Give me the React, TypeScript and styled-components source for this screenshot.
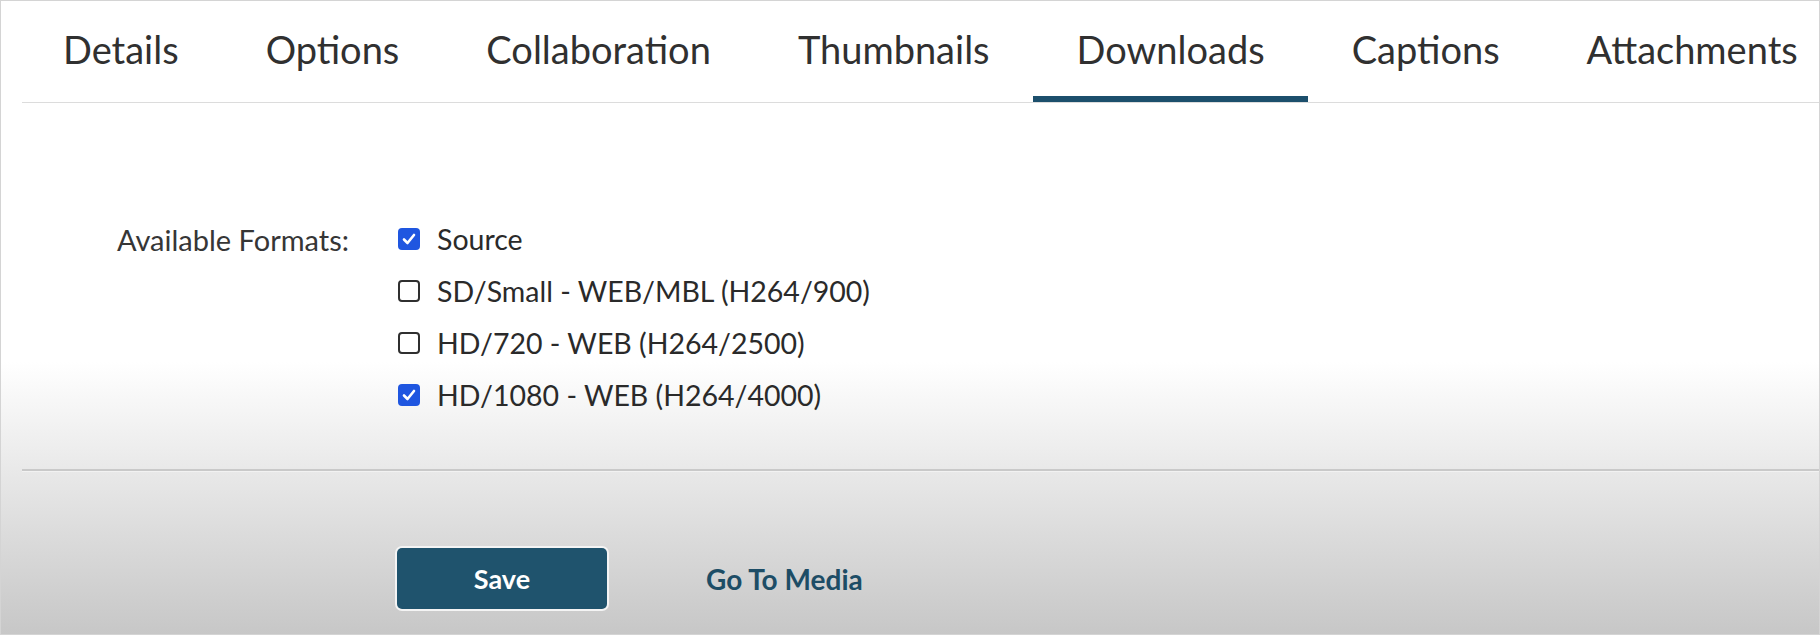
import React from "react";
import styled, { createGlobalStyle } from "styled-components";

const Global = createGlobalStyle`
  html, body {
    margin: 0;
    padding: 0;
  }
  body {
    font-family: Lato, "Open Sans", "Liberation Sans", sans-serif;
  }
`;

const Frame = styled.div`
  box-sizing: border-box;
  width: 1820px;
  height: 635px;
  border: 1px solid #d4d4d4;
  background: linear-gradient(to bottom, #ffffff 0%, #ffffff 57%, #c7c7c7 100%);
  padding-left: 21px;
  overflow: hidden;
`;

const TabBar = styled.div`
  display: flex;
  border-bottom: 1px solid #dcdcdc;
`;

const Tab = styled.div<{ $active?: boolean }>`
  box-sizing: border-box;
  height: 101px;
  padding: 25px 43.5px 24px;
  font-size: 38px;
  line-height: 46px;
  color: #303030;
  white-space: nowrap;
  border-bottom: 6px solid ${(p) => (p.$active ? "#1c4f6c" : "transparent")};

  &:first-child {
    padding-left: 41px;
  }
`;

const Form = styled.div`
  display: grid;
  grid-template-columns: 281px auto;
  padding: 110px 0 0 95px;
`;

const FieldLabel = styled.div`
  height: 52px;
  display: flex;
  align-items: center;
  font-size: 29px;
  color: #363636;
`;

const Options = styled.div`
  display: flex;
  flex-direction: column;
`;

const OptionRow = styled.label`
  height: 52px;
  display: flex;
  align-items: center;
  gap: 17px;
  font-size: 28.5px;
  color: #2a2a2a;
`;

const Box = styled.span<{ $checked?: boolean }>`
  box-sizing: border-box;
  width: 22px;
  height: 22px;
  border-radius: 4px;
  display: flex;
  align-items: center;
  justify-content: center;
  background: ${(p) => (p.$checked ? "#1f56e0" : "#ffffff")};
  border: ${(p) => (p.$checked ? "none" : "2px solid #2f2f2f")};
`;

const Divider = styled.div`
  margin-top: 48px;
  height: 2px;
  background: #c9c9c9;
  border-bottom: 1px solid #f2f2f2;
`;

const Footer = styled.div`
  display: flex;
  align-items: center;
  gap: 99px;
  padding: 76px 0 0 375px;
`;

const SaveButton = styled.button`
  width: 210px;
  height: 61px;
  border: none;
  border-radius: 5px;
  background: #1f536d;
  color: #ffffff;
  font-family: Lato, "Liberation Sans", sans-serif;
  font-size: 27px;
  font-weight: 700;
  box-shadow: 0 0 0 2px #f4f4f4;
`;

const MediaLink = styled.a`
  font-size: 28px;
  font-weight: 700;
  color: #1d4d66;
  text-decoration: none;
`;

const Check = () => (
  <svg width="16" height="16" viewBox="0 0 16 16">
    <path d="M3 8.5 L6.5 12 L13 4" fill="none" stroke="#fff" strokeWidth="2.6" strokeLinecap="round" strokeLinejoin="round" />
  </svg>
);

const tabs = ["Details", "Options", "Collaboration", "Thumbnails", "Downloads", "Captions", "Attachments"];

const formats = [
  { label: "Source", checked: true },
  { label: "SD/Small - WEB/MBL (H264/900)", checked: false },
  { label: "HD/720 - WEB (H264/2500)", checked: false },
  { label: "HD/1080 - WEB (H264/4000)", checked: true },
];

export default function App() {
  return (
    <>
      <Global />
      <Frame>
        <TabBar>
          {tabs.map((t) => (
            <Tab key={t} $active={t === "Downloads"}>
              {t}
            </Tab>
          ))}
        </TabBar>
        <Form>
          <FieldLabel>Available Formats:</FieldLabel>
          <Options>
            {formats.map((f) => (
              <OptionRow key={f.label}>
                <Box $checked={f.checked}>{f.checked ? <Check /> : null}</Box>
                {f.label}
              </OptionRow>
            ))}
          </Options>
        </Form>
        <Divider />
        <Footer>
          <SaveButton>Save</SaveButton>
          <MediaLink href="#">Go To Media</MediaLink>
        </Footer>
      </Frame>
    </>
  );
}
